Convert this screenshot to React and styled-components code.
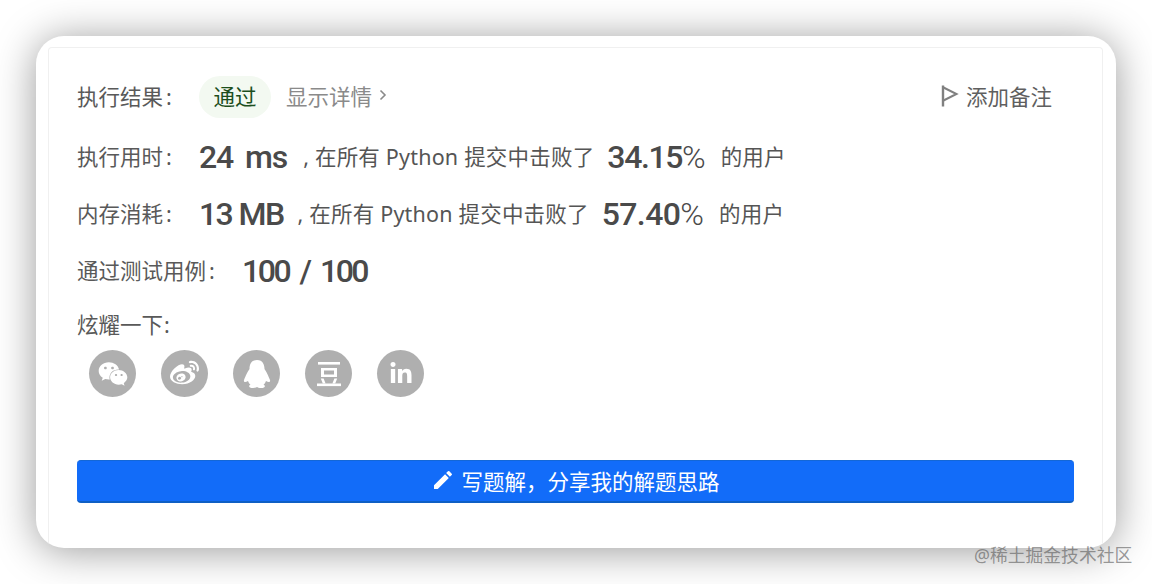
import React from 'react'
import styled, { createGlobalStyle } from 'styled-components'
import { FaWeixin, FaWeibo, FaLinkedinIn } from 'react-icons/fa'
import { MdEdit } from 'react-icons/md'

const GlobalStyle = createGlobalStyle`
  html, body {
    margin: 0;
    height: 584px;
    overflow: hidden;
    background: #fff;
    font-family: "Noto Sans", "Noto Sans CJK SC", sans-serif;
  }
`

const Page = styled.div`
  position: relative;
  width: 1152px;
  height: 584px;
  padding: 36px;
  box-sizing: border-box;
`

const Card = styled.div`
  width: 1080px;
  height: 512px;
  background: #fff;
  border-radius: 28px;
  box-shadow: 0 3px 42px rgba(0, 0, 0, 0.4);
  overflow: hidden;
  padding: 11px 13px 0 12px;
  box-sizing: border-box;
  display: flex;
`

const Panel = styled.div`
  flex: 1;
  border: 1px solid #f0f0f0;
  border-bottom: 0;
  border-radius: 4px 4px 0 0;
  padding: 0 28px;
  display: flex;
  flex-direction: column;
`

const Row = styled.div`
  display: flex;
  align-items: center;
  height: 40px;
  margin-top: ${(p) => p.$top}px;
  color: #555;
  font-size: 21.5px;
  white-space: nowrap;
`

const Text = styled.span`
  padding-bottom: 4px;
  letter-spacing: 0.2px;
  margin-left: ${(p) => p.$left || 0}px;
`

const Label = styled(Text)`
  width: ${(p) => p.$width || 122}px;
  flex: none;
  letter-spacing: 0;
  color: #595959;
`

const Colon = styled.span`
  margin-left: ${(p) => p.$gap ?? 3}px;
`

const Pill = styled.span`
  width: 72px;
  height: 42px;
  padding-bottom: 3px;
  box-sizing: border-box;
  border-radius: 21px;
  background: #f3f9f1;
  color: #1d4f1d;
  display: flex;
  align-items: center;
  justify-content: center;
`

const Details = styled.span`
  margin-left: 15px;
  padding-bottom: 4px;
  color: #8a8a8a;
  display: flex;
  align-items: center;
  gap: 7px;
`

const Remark = styled.span`
  margin-left: auto;
  margin-right: 22px;
  padding-bottom: 3px;
  display: flex;
  align-items: center;
  gap: 7px;
  color: #5f5f5f;
`

const Num = styled.span`
  font-family: Roboto, sans-serif;
  font-weight: 500;
  font-size: 32px;
  letter-spacing: ${(p) => p.$spacing ?? -1.1}px;
  word-spacing: ${(p) => p.$words ?? 5}px;
  color: #4a4a4a;
  margin: 0 ${(p) => p.$right || 0}px 0 ${(p) => p.$left || 0}px;
`

const Percent = styled.span`
  font-weight: 300;
  letter-spacing: 0;
`

const Share = styled.div`
  display: flex;
  gap: 25px;
  margin: 5px 0 0 12px;
`

const Circle = styled.a`
  width: 47px;
  height: 47px;
  border-radius: 50%;
  background: #afafaf;
  color: #fff;
  display: flex;
  align-items: center;
  justify-content: center;
  font-size: ${(p) => p.$size || 26}px;
`

const WriteButton = styled.button`
  margin-top: 63px;
  height: 43px;
  flex: none;
  border: 0;
  border-bottom: 2px solid #0f5fc4;
  border-top: 1px solid #1467d6;
  border-radius: 4px;
  background: #126cf9;
  color: #fff;
  font-family: inherit;
  font-size: 21.5px;
  display: flex;
  align-items: center;
  justify-content: center;
  gap: 6px;
  padding: 0 0 2px;
`

const Watermark = styled.span`
  position: absolute;
  left: 974px;
  top: 543px;
  font-size: 17.8px;
  line-height: 24px;
  color: rgba(90, 90, 90, 0.62);
  white-space: nowrap;
`

const FlagIcon = () => (
  <svg width="18" height="22" viewBox="0 0 18 22" fill="none" stroke="#808080">
    <path d="M2 0.5v21" strokeWidth="2.4" />
    <path d="M2.5 2.5l13 6.5-13 6.5" strokeWidth="2" />
  </svg>
)

const Chevron = () => (
  <svg width="8" height="12" viewBox="0 0 8 12" fill="none" stroke="#8a8a8a" strokeWidth="1.6">
    <path d="M1.5 1.5l4.5 4.5-4.5 4.5" />
  </svg>
)

const QqIcon = () => (
  <svg width="30" height="30" viewBox="0 0 30 30" fill="#fff">
    <path d="M15 1C9 1 7.5 6 7.5 10C6 12 3.5 17 2 21C1.5 23 3 24 6 22C6.5 23.5 7.5 25 8.5 25.5C6 27 7 29 11 29C13 29 14.5 28.5 15 28C15.5 28.5 17 29 19 29C23 29 24 27 21.5 25.5C22.5 25 23.5 23.5 24 22C27 24 28.5 23 28 21C26.5 17 24 12 22.5 10C22.5 6 21 1 15 1Z" />
  </svg>
)

const DoubanIcon = () => (
  <svg width="28" height="28" viewBox="0 0 28 28" fill="#fff">
    <rect x="3" y="2" width="22" height="2.6" />
    <path d="M6 8h16v9H6zM9 10.6v3.8h10v-3.8z" fillRule="evenodd" />
    <path d="M8.6 18.5l2 5h-2.8l-2-5zM19.4 18.5h2.8l-2 5h-2.8z" />
    <rect x="2" y="23.5" width="24" height="2.6" />
  </svg>
)

const App = () => (
  <Page>
    <GlobalStyle />
    <Card>
      <Panel>
        <Row $top={29}>
          <Label>执行结果<Colon>:</Colon></Label>
          <Pill>通过</Pill>
          <Details>
            显示详情
            <Chevron />
          </Details>
          <Remark>
            <FlagIcon />
            添加备注
          </Remark>
        </Row>
        <Row $top={20}>
          <Label>执行用时<Colon>:</Colon></Label>
          <Num>24 ms</Num>
          <Text $left={16}>, 在所有 Python 提交中击败了</Text>
          <Num $left={13} $spacing={-1.4} $right={15}>34.15<Percent>%</Percent></Num>
          <Text>的用户</Text>
        </Row>
        <Row $top={17}>
          <Label>内存消耗<Colon>:</Colon></Label>
          <Num $words={0} $spacing={-1.6}>13 MB</Num>
          <Text $left={14}>, 在所有 Python 提交中击败了</Text>
          <Num $left={13} $spacing={-0.6} $right={15}>57.40<Percent>%</Percent></Num>
          <Text>的用户</Text>
        </Row>
        <Row $top={17}>
          <Label $width={165}>通过测试用例<Colon>:</Colon></Label>
          <Num $spacing={-2.5}>100 / 100</Num>
        </Row>
        <Row $top={14}>
          <Label>炫耀一下<Colon $gap={1}>:</Colon></Label>
        </Row>
        <Share>
          <Circle $size={30}><FaWeixin /></Circle>
          <Circle $size={29}><FaWeibo /></Circle>
          <Circle><QqIcon /></Circle>
          <Circle><DoubanIcon /></Circle>
          <Circle $size={24}><FaLinkedinIn /></Circle>
        </Share>
        <WriteButton>
          <MdEdit size={24} />
          写题解，分享我的解题思路
        </WriteButton>
      </Panel>
    </Card>
    <Watermark>@稀土掘金技术社区</Watermark>
  </Page>
)

export default App
